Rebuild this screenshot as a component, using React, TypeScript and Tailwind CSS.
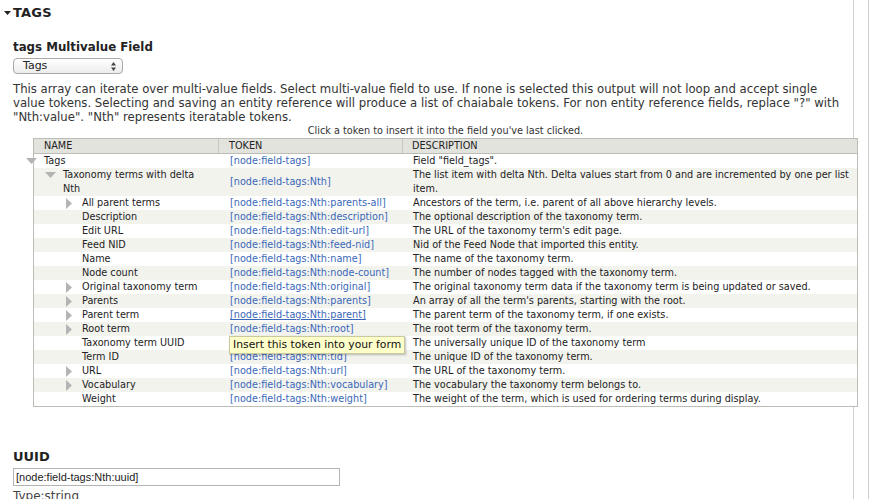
const rows: { name: string; token: string; desc: string; depth: number; arrow?: "down" | "right"; two?: boolean }[] = [
  { name: "Tags", token: "[node:field-tags]", desc: 'Field "field_tags".', depth: 0, arrow: "down" },
  {
    name: "Taxonomy terms with delta Nth",
    token: "[node:field-tags:Nth]",
    desc: "The list item with delta Nth. Delta values start from 0 and are incremented by one per list item.",
    depth: 1,
    arrow: "down",
    two: true,
  },
  { name: "All parent terms", token: "[node:field-tags:Nth:parents-all]", desc: "Ancestors of the term, i.e. parent of all above hierarchy levels.", depth: 2, arrow: "right" },
  { name: "Description", token: "[node:field-tags:Nth:description]", desc: "The optional description of the taxonomy term.", depth: 2 },
  { name: "Edit URL", token: "[node:field-tags:Nth:edit-url]", desc: "The URL of the taxonomy term's edit page.", depth: 2 },
  { name: "Feed NID", token: "[node:field-tags:Nth:feed-nid]", desc: "Nid of the Feed Node that imported this entity.", depth: 2 },
  { name: "Name", token: "[node:field-tags:Nth:name]", desc: "The name of the taxonomy term.", depth: 2 },
  { name: "Node count", token: "[node:field-tags:Nth:node-count]", desc: "The number of nodes tagged with the taxonomy term.", depth: 2 },
  { name: "Original taxonomy term", token: "[node:field-tags:Nth:original]", desc: "The original taxonomy term data if the taxonomy term is being updated or saved.", depth: 2, arrow: "right" },
  { name: "Parents", token: "[node:field-tags:Nth:parents]", desc: "An array of all the term's parents, starting with the root.", depth: 2, arrow: "right" },
  { name: "Parent term", token: "[node:field-tags:Nth:parent]", desc: "The parent term of the taxonomy term, if one exists.", depth: 2, arrow: "right" },
  { name: "Root term", token: "[node:field-tags:Nth:root]", desc: "The root term of the taxonomy term.", depth: 2, arrow: "right" },
  { name: "Taxonomy term UUID", token: "[node:field-tags:Nth:uuid]", desc: "The universally unique ID of the taxonomy term", depth: 2 },
  { name: "Term ID", token: "[node:field-tags:Nth:tid]", desc: "The unique ID of the taxonomy term.", depth: 2 },
  { name: "URL", token: "[node:field-tags:Nth:url]", desc: "The URL of the taxonomy term.", depth: 2, arrow: "right" },
  { name: "Vocabulary", token: "[node:field-tags:Nth:vocabulary]", desc: "The vocabulary the taxonomy term belongs to.", depth: 2, arrow: "right" },
  { name: "Weight", token: "[node:field-tags:Nth:weight]", desc: "The weight of the term, which is used for ordering terms during display.", depth: 2 },
];

const indent = ["pl-[10px]", "pl-[29px]", "pl-[48px]"];

function Arrow({ dir }: { dir?: "down" | "right" }) {
  if (dir === "down")
    return (
      <span className="inline-block w-[11px] -ml-[18px] mr-[7px] shrink-0">
        <svg width="11" height="6" viewBox="0 0 11 6" className="block">
          <path d="M0 0 L11 0 L5.5 6 Z" fill="#b4b4b4" />
        </svg>
      </span>
    );
  if (dir === "right")
    return (
      <span className="inline-block w-[11px] -ml-[16px] mr-[5px] shrink-0">
        <svg width="6" height="11" viewBox="0 0 6 11" className="block">
          <path d="M0 0 L6 5.5 L0 11 Z" fill="#b4b4b4" />
        </svg>
      </span>
    );
  return null;
}

export default function App() {
  return (
    <div className="w-[885px] h-[499px] overflow-hidden bg-white text-[#222] font-['DejaVu_Sans',sans-serif]">
      <div className="w-[869px] h-[499px] border-r border-[#cfcfcf]">
        <div className="w-[854px] h-[499px] border-r border-[#cfcfcf]">
          {/* fieldset legend */}
          <div className="flex items-center h-[24px] pt-[2px] pl-[4px]">
            <svg width="7" height="4" viewBox="0 0 7 4" className="mr-[2px]">
              <path d="M0 0 L7 0 L3.5 4 Z" fill="#222" />
            </svg>
            <span className="text-[13px] font-bold tracking-[0.2px]">TAGS</span>
          </div>

          <div className="pl-[13px]">
            <h3 className="mt-[15px] text-[11.8px] font-bold leading-[16px]">tags Multivalue Field</h3>
            <div className="mt-[3px] w-[110px] h-[16px] rounded-[4px] border border-[#a9a9a9] bg-gradient-to-b from-white to-[#ececec] flex items-center justify-between pl-[9px] pr-[6px] text-[11px]">
              <span>Tags</span>
              <svg width="5" height="9" viewBox="0 0 5 9">
                <path d="M0 3.5 L2.5 0 L5 3.5 Z M0 5.5 L5 5.5 L2.5 9 Z" fill="#444" />
              </svg>
            </div>
            <p className="mt-[8px] text-[11.7px] leading-[14px] text-[#333] whitespace-nowrap">
              This array can iterate over multi-value fields. Select multi-value field to use. If none is selected this output will not loop and accept single
              <br />
              value tokens. Selecting and saving an entity reference will produce a list of chaiabale tokens. For non entity reference fields, replace "?" with
              <br />
              "Nth:value". "Nth" represents iteratable tokens.
            </p>
            <div className="ml-[20px] w-[825px] relative">
              <div className="text-center text-[9.7px] leading-[14px] text-[#333]">
                Click a token to insert it into the field you've last clicked.
              </div>
              <div className="border border-[#bdbdb8] bg-white text-[9.7px] leading-[14px]">
                <div className="grid grid-cols-[185px_184px_1fr] bg-[#e2e3dd] border-b border-[#bdbdb8]">
                  <div className="pl-[10px] border-r border-[#c8c8c2]">NAME</div>
                  <div className="pl-[10px] border-r border-[#c8c8c2]">TOKEN</div>
                  <div className="pl-[9px]">DESCRIPTION</div>
                </div>
                {rows.map((r, i) => (
                  <div key={r.token} className={`grid grid-cols-[185px_184px_1fr] ${i % 2 === 1 ? "bg-[#f3f3ee]" : "bg-white"}`}>
                    <div className={`${indent[r.depth]} flex items-start`}>
                      {r.arrow && (
                        <span className={r.arrow === "down" ? "pt-[4px] flex" : "pt-[2px] flex"}>
                          <Arrow dir={r.arrow} />
                        </span>
                      )}
                      <span>
                        {r.two ? (
                          <>
                            Taxonomy terms with delta
                            <br />
                            Nth
                          </>
                        ) : (
                          r.name
                        )}
                      </span>
                    </div>
                    <div className="pl-[11px] relative flex items-center">
                      <span className={`text-[#3a67b8] ${r.name === "Parent term" ? "underline" : ""}`}>{r.token}</span>
                      {r.name === "Taxonomy term UUID" && (
                        <div className="absolute left-[10px] top-0 z-10 h-[18px] px-[3px] flex items-center bg-[#ffffca] border border-[#c9c9a0] shadow-[1px_1px_2px_rgba(0,0,0,0.25)] text-[10.8px] text-[#111] whitespace-nowrap">
                          Insert this token into your form
                        </div>
                      )}
                    </div>
                    <div className="pl-[10px] whitespace-nowrap">
                      {r.two ? (
                        <>
                          The list item with delta Nth. Delta values start from 0 and are incremented by one per list
                          <br />
                          item.
                        </>
                      ) : (
                        r.desc
                      )}
                    </div>
                  </div>
                ))}
              </div>
            </div>

            <h3 className="mt-[42px] text-[13px] font-bold leading-[16px]">UUID</h3>
            <div className="mt-[3px] w-[327px] h-[18px] border border-[#b4b4b4] flex items-center pl-[2px] text-[11px] font-['Liberation_Sans',sans-serif]">
              [node:field-tags:Nth:uuid]
            </div>
            <div className="mt-[3px] text-[12px] text-[#444] leading-[14px]">Type:string</div>
          </div>
        </div>
      </div>
    </div>
  );
}
